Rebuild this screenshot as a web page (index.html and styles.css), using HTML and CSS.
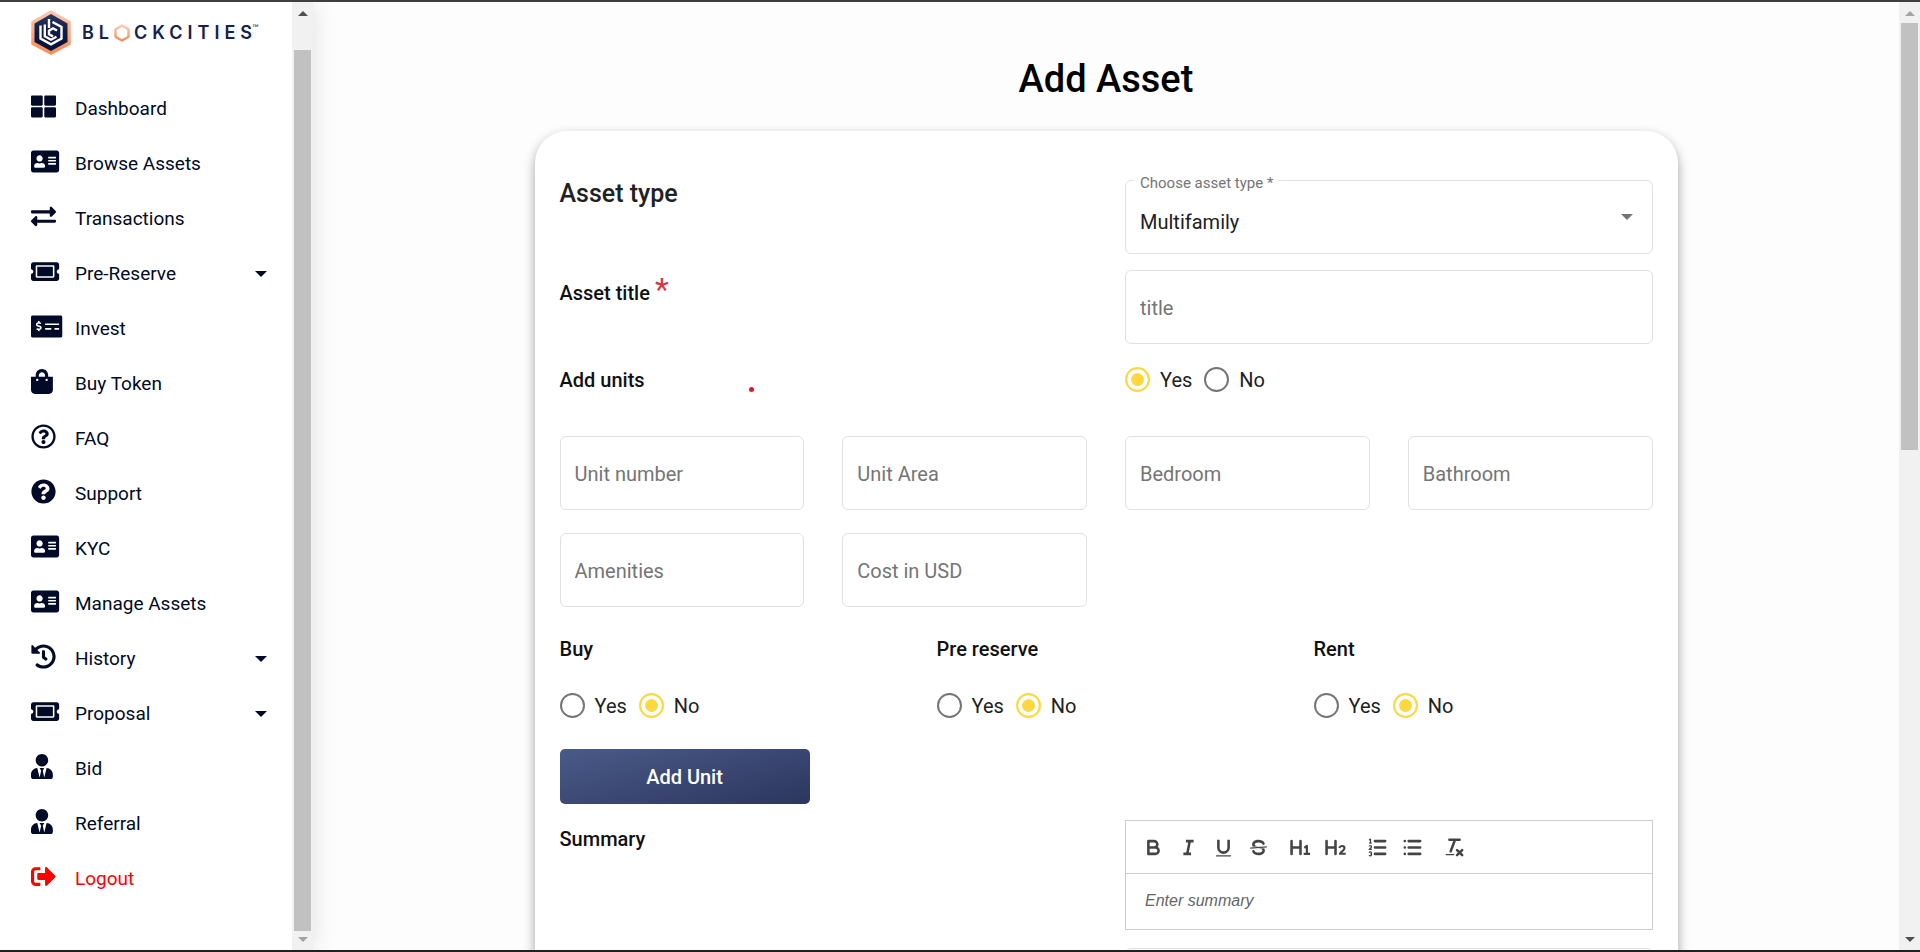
FILE: index.html
```
<!DOCTYPE html>
<html lang="en">
<head>
<meta charset="utf-8">
<meta name="viewport" content="width=device-width, initial-scale=1">
<title>Add Asset - Blockcities</title>
<link rel="stylesheet" href="styles.css">
</head>
<body>
<svg class="sprite" aria-hidden="true">
  <symbol id="i-grid" viewBox="0 0 512 512" preserveAspectRatio="xMinYMid meet"><path d="M296 32h192c13.255 0 24 10.745 24 24v160c0 13.255-10.745 24-24 24H296c-13.255 0-24-10.745-24-24V56c0-13.255 10.745-24 24-24zm-80 0H24C10.745 32 0 42.745 0 56v160c0 13.255 10.745 24 24 24h192c13.255 0 24-10.745 24-24V56c0-13.255-10.745-24-24-24zM0 296v160c0 13.255 10.745 24 24 24h192c13.255 0 24-10.745 24-24V296c0-13.255-10.745-24-24-24H24c-13.255 0-24 10.745-24 24zm296 184h192c13.255 0 24-10.745 24-24V296c0-13.255-10.745-24-24-24H296c-13.255 0-24 10.745-24 24v160c0 13.255 10.745 24 24 24z"/></symbol>
  <symbol id="i-card" viewBox="0 0 576 512" preserveAspectRatio="xMinYMid meet"><path d="M528 32H48C21.500 32 0 53.500 0 80v352c0 26.500 21.500 48 48 48h480c26.500 0 48-21.500 48-48V80c0-26.500-21.500-48-48-48zm-352 96c35.300 0 64 28.700 64 64s-28.700 64-64 64-64-28.700-64-64 28.700-64 64-64zm112 236.800c0 10.600-10 19.200-22.400 19.200H86.400C74 384 64 375.400 64 364.800v-19.200c0-31.800 30.100-57.600 67.200-57.600h5c12.300 5.100 25.700 8 39.800 8s27.600-2.900 39.800-8h5c37.100 0 67.200 25.800 67.200 57.600v19.200zM512 312c0 4.400-3.600 8-8 8H360c-4.400 0-8-3.600-8-8v-16c0-4.400 3.600-8 8-8h144c4.400 0 8 3.600 8 8v16zm0-64c0 4.400-3.600 8-8 8H360c-4.400 0-8-3.600-8-8v-16c0-4.400 3.600-8 8-8h144c4.400 0 8 3.600 8 8v16zm0-64c0 4.400-3.600 8-8 8H360c-4.400 0-8-3.600-8-8v-16c0-4.400 3.600-8 8-8h144c4.400 0 8 3.600 8 8v16z"/></symbol>
  <symbol id="i-exchange" viewBox="0 0 512 512" preserveAspectRatio="xMinYMid meet"><path d="M0 168v-16c0-13.255 10.745-24 24-24h360V80c0-21.367 25.899-32.042 40.971-16.971l80 80c9.372 9.373 9.372 24.569 0 33.941l-80 80C409.956 271.982 384 261.456 384 240v-48H24c-13.255 0-24-10.745-24-24zm488 152H128v-48c0-21.314-25.862-32.080-40.971-16.971l-80 80c-9.372 9.373-9.372 24.569 0 33.941l80 80C102.057 463.997 128 453.437 128 432v-48h360c13.255 0 24-10.745 24-24v-16c0-13.255-10.745-24-24-24z"/></symbol>
  <symbol id="i-ticket" viewBox="0 0 576 512" preserveAspectRatio="xMinYMid meet"><path d="M128 160h320v192H128V160zm400 96c0 26.510 21.490 48 48 48v96c0 26.510-21.490 48-48 48H48c-26.510 0-48-21.490-48-48v-96c26.510 0 48-21.490 48-48s-21.490-48-48-48v-96c0-26.510 21.490-48 48-48h480c26.510 0 48 21.490 48 48v96c-26.510 0-48 21.490-48 48zm-48-104c0-13.255-10.745-24-24-24H120c-13.255 0-24 10.745-24 24v208c0 13.255 10.745 24 24 24h336c13.255 0 24-10.745 24-24V152z"/></symbol>
  <symbol id="i-check" viewBox="0 0 640 512" preserveAspectRatio="xMinYMid meet"><path d="M608 32H32C14.330 32 0 46.330 0 64v384c0 17.670 14.330 32 32 32h576c17.670 0 32-14.330 32-32V64c0-17.670-14.330-32-32-32zM176 327.880V344c0 4.420-3.580 8-8 8h-16c-4.420 0-8-3.580-8-8v-16.290c-11.290-.580-22.270-4.520-31.370-11.350-3.900-2.930-4.100-8.770-.570-12.140l11.750-11.210c2.770-2.640 6.890-2.760 10.130-.730 3.870 2.420 8.260 3.720 12.820 3.720h28.110c6.500 0 11.800-5.920 11.800-13.190 0-5.950-3.610-11.190-8.770-12.730l-45-13.500c-18.590-5.580-31.580-23.420-31.580-43.390 0-24.520 19.050-44.440 42.670-45.070V152c0-4.420 3.580-8 8-8h16c4.420 0 8 3.580 8 8v16.290c11.290.580 22.270 4.510 31.370 11.350 3.900 2.930 4.100 8.770.570 12.140l-11.750 11.210c-2.770 2.640-6.890 2.760-10.130.730-3.870-2.430-8.260-3.720-12.820-3.720h-28.110c-6.500 0-11.800 5.920-11.800 13.190 0 5.950 3.610 11.190 8.770 12.730l45 13.500c18.590 5.580 31.580 23.420 31.580 43.390 0 24.530-19.050 44.440-42.670 45.070zM416 312c0 4.420-3.580 8-8 8H296c-4.420 0-8-3.580-8-8v-16c0-4.420 3.580-8 8-8h112c4.420 0 8 3.580 8 8v16zm160 0c0 4.420-3.580 8-8 8h-80c-4.420 0-8-3.580-8-8v-16c0-4.420 3.580-8 8-8h80c4.420 0 8 3.580 8 8v16zm0-96c0 4.420-3.580 8-8 8H296c-4.420 0-8-3.580-8-8v-16c0-4.420 3.580-8 8-8h272c4.420 0 8 3.580 8 8v16z"/></symbol>
  <symbol id="i-bag" viewBox="0 0 448 512" preserveAspectRatio="xMinYMid meet"><path d="M352 160v-32C352 57.420 294.579 0 224 0 153.420 0 96 57.420 96 128v32H0v272c0 44.183 35.817 80 80 80h288c44.183 0 80-35.817 80-80V160h-96zm-192-32c0-35.290 28.710-64 64-64s64 28.710 64 64v32H160v-32zm160 120c-13.255 0-24-10.745-24-24s10.745-24 24-24 24 10.745 24 24-10.745 24-24 24zm-192 0c-13.255 0-24-10.745-24-24s10.745-24 24-24 24 10.745 24 24-10.745 24-24 24z"/></symbol>
  <symbol id="i-faq" viewBox="0 0 512 512" preserveAspectRatio="xMinYMid meet"><path d="M256 8C119.043 8 8 119.083 8 256c0 136.997 111.043 248 248 248s248-111.003 248-248C504 119.083 392.957 8 256 8zm0 448c-110.532 0-200-89.431-200-200 0-110.495 89.472-200 200-200 110.491 0 200 89.471 200 200 0 110.530-89.431 200-200 200zm107.244-255.200c0 67.052-72.421 68.084-72.421 92.863V300c0 6.627-5.373 12-12 12h-45.647c-6.627 0-12-5.373-12-12v-8.659c0-35.745 27.100-50.034 47.579-61.516 17.561-9.845 28.324-16.541 28.324-29.579 0-17.246-21.999-28.693-39.784-28.693-23.189 0-33.894 10.977-48.942 29.969-4.057 5.120-11.460 6.071-16.666 2.124l-27.824-21.098c-5.107-3.872-6.251-11.066-2.644-16.363C184.846 131.491 214.940 112 261.794 112c49.071 0 101.450 38.304 101.450 88.800zM298 368c0 23.159-18.841 42-42 42s-42-18.841-42-42 18.841-42 42-42 42 18.841 42 42z"/></symbol>
  <symbol id="i-support" viewBox="0 0 512 512" preserveAspectRatio="xMinYMid meet"><path d="M504 256c0 136.997-111.043 248-248 248S8 392.997 8 256C8 119.083 119.043 8 256 8s248 111.083 248 248zM262.655 90c-54.497 0-89.255 22.957-116.549 63.758-3.536 5.286-2.353 12.415 2.715 16.258l34.699 26.310c5.205 3.947 12.621 3.008 16.665-2.122 17.864-22.658 30.113-35.797 57.303-35.797 20.429 0 45.698 13.148 45.698 32.958 0 14.976-12.363 22.667-32.534 33.976C247.128 238.528 216 254.941 216 296v4c0 6.627 5.373 12 12 12h56c6.627 0 12-5.373 12-12v-1.333c0-28.462 83.186-29.647 83.186-106.667 0-58.002-60.165-102-116.531-102zM256 338c-25.365 0-46 20.635-46 46 0 25.364 20.635 46 46 46s46-20.636 46-46c0-25.365-20.635-46-46-46z"/></symbol>
  <symbol id="i-history" viewBox="0 0 512 512" preserveAspectRatio="xMinYMid meet"><path d="M504 255.531c.253 136.640-111.180 248.372-247.820 248.468-59.015.042-113.223-20.530-155.822-54.911-11.077-8.940-11.905-25.541-1.839-35.607l11.267-11.267c8.609-8.609 22.353-9.551 31.891-1.984C173.062 425.135 212.781 440 256 440c101.705 0 184-82.311 184-184 0-101.705-82.311-184-184-184-48.814 0-93.149 18.969-126.068 49.932l50.754 50.754c10.080 10.080 2.941 27.314-11.313 27.314H24c-8.837 0-16-7.163-16-16V38.627c0-14.254 17.234-21.393 27.314-11.314l49.372 49.372C129.209 34.136 189.552 8 256 8c136.810 0 247.747 110.780 248 247.531zm-180.912 78.784l9.823-12.630c8.138-10.463 6.253-25.542-4.210-33.679L288 256.349V152c0-13.255-10.745-24-24-24h-16c-13.255 0-24 10.745-24 24v135.651l65.409 50.874c10.463 8.137 25.541 6.253 33.679-4.210z"/></symbol>
  <symbol id="i-user" viewBox="0 0 448 512" preserveAspectRatio="xMinYMid meet"><path d="M224 256c70.700 0 128-57.300 128-128S294.700 0 224 0 96 57.300 96 128s57.300 128 128 128zm95.800 32.600L272 480l-32-136 32-56h-96l32 56-32 136-47.800-191.400C56.900 292 0 350.300 0 422.400V464c0 26.500 21.500 48 48 48h352c26.500 0 48-21.500 48-48v-41.600c0-72.100-56.900-130.400-128.200-133.800z"/></symbol>
  <symbol id="i-logout" viewBox="0 0 512 512" preserveAspectRatio="xMinYMid meet"><path d="M497 273L329 441c-15 15-41 4.500-41-17v-96H152c-13.300 0-24-10.700-24-24v-96c0-13.300 10.700-24 24-24h136V88c0-21.400 25.900-32 41-17l168 168c9.300 9.400 9.300 24.600 0 34zM192 436v-40c0-6.600-5.400-12-12-12H96c-17.700 0-32-14.300-32-32V160c0-17.700 14.300-32 32-32h84c6.600 0 12-5.400 12-12V76c0-6.600-5.400-12-12-12H96c-53 0-96 43-96 96v192c0 53 43 96 96 96h84c6.600 0 12-5.400 12-12z"/></symbol>
  <symbol id="i-down" viewBox="0 0 12 6"><path d="M0 0h12L6 6z"/></symbol>
  <symbol id="i-up" viewBox="0 0 10 5"><path d="M5 0l5 5H0z"/></symbol>
</svg>

<div class="app">
  <aside class="sidebar">
    <div class="sidebar-body">
      <a class="brand" href="#" aria-label="Blockcities">
        <svg class="brand-mark" viewBox="0 0 40 45" aria-hidden="true">
          <defs>
            <linearGradient id="peach" x1="0" y1="0" x2="0" y2="1"><stop offset="0" stop-color="#fcc9b2"/><stop offset="1" stop-color="#ff8a50"/></linearGradient>
            <linearGradient id="navy" x1="0" y1="0" x2="0" y2="1"><stop offset="0" stop-color="#2a3760"/><stop offset=".5" stop-color="#101b47"/><stop offset="1" stop-color="#04103d"/></linearGradient>
          </defs>
          <path d="M20 1l19 11v22L20 44 1 34V12z" fill="url(#peach)" stroke="url(#peach)" stroke-width="1.500" stroke-linejoin="round"/>
          <path d="M20 4l16.500 9.500v18.500L20 41 3.500 32V13.500z" fill="url(#navy)"/>
          <g fill="none" stroke="#fff" stroke-width="2.400">
            <path d="M9.500 15.500v13L20 34.300l10.500-5.800V17l-9-5"/>
            <path d="M13.800 14.500v11.800l6.200 3.400 5.500-3"/>
            <path d="M18 9v9"/>
            <path d="M26 20.500L22 18.300l-4 2.300v3.600l4 2.200"/>
          </g>
        </svg>
        <span class="brand-name">BL<svg class="brand-o" viewBox="0 0 16 18" aria-hidden="true"><path d="M8 1.500l6.500 3.700v7.600L8 16.500l-6.500-3.700V5.200z" fill="none" stroke="url(#peach)" stroke-width="2.400" stroke-linejoin="round"/></svg>CKCITIE<span class="brand-last">S</span></span><span class="brand-tm">™</span>
      </a>
      <nav class="menu">
        <a class="menu-item" href="#"><svg class="menu-icon"><use href="#i-grid"/></svg><span>Dashboard</span></a>
        <a class="menu-item" href="#"><svg class="menu-icon"><use href="#i-card"/></svg><span>Browse Assets</span></a>
        <a class="menu-item" href="#"><svg class="menu-icon"><use href="#i-exchange"/></svg><span>Transactions</span></a>
        <a class="menu-item" href="#"><svg class="menu-icon"><use href="#i-ticket"/></svg><span>Pre-Reserve</span><svg class="caret"><use href="#i-down"/></svg></a>
        <a class="menu-item" href="#"><svg class="menu-icon"><use href="#i-check"/></svg><span>Invest</span></a>
        <a class="menu-item" href="#"><svg class="menu-icon"><use href="#i-bag"/></svg><span>Buy Token</span></a>
        <a class="menu-item" href="#"><svg class="menu-icon"><use href="#i-faq"/></svg><span>FAQ</span></a>
        <a class="menu-item" href="#"><svg class="menu-icon"><use href="#i-support"/></svg><span>Support</span></a>
        <a class="menu-item" href="#"><svg class="menu-icon"><use href="#i-card"/></svg><span>KYC</span></a>
        <a class="menu-item" href="#"><svg class="menu-icon"><use href="#i-card"/></svg><span>Manage Assets</span></a>
        <a class="menu-item" href="#"><svg class="menu-icon"><use href="#i-history"/></svg><span>History</span><svg class="caret"><use href="#i-down"/></svg></a>
        <a class="menu-item" href="#"><svg class="menu-icon"><use href="#i-ticket"/></svg><span>Proposal</span><svg class="caret"><use href="#i-down"/></svg></a>
        <a class="menu-item" href="#"><svg class="menu-icon"><use href="#i-user"/></svg><span>Bid</span></a>
        <a class="menu-item" href="#"><svg class="menu-icon"><use href="#i-user"/></svg><span>Referral</span></a>
        <a class="menu-item menu-item-logout" href="#"><svg class="menu-icon"><use href="#i-logout"/></svg><span>Logout</span></a>
      </nav>
    </div>
    <div class="scrollbar scrollbar-end" aria-hidden="true">
      <svg class="scroll-arrow scroll-arrow-on"><use href="#i-up"/></svg>
      <div class="scroll-track"><div class="scroll-thumb"></div></div>
      <svg class="scroll-arrow"><use href="#i-down"/></svg>
    </div>
  </aside>

  <main class="content">
    <h1 class="page-title">Add Asset</h1>
    <form class="card">
      <div class="row">
        <label class="heading" for="asset-type">Asset type</label>
        <div class="select-field">
          <span class="select-caption">Choose asset type *</span>
          <select class="field select" id="asset-type"><option>Multifamily</option></select>
          <svg class="select-arrow" aria-hidden="true"><use href="#i-down"/></svg>
        </div>
      </div>
      <div class="row">
        <label class="label" for="asset-title">Asset title <span class="required">*</span></label>
        <input class="field" id="asset-title" type="text" placeholder="title">
      </div>
      <div class="row row-units">
        <div class="label-line"><span class="label" id="units-label">Add units</span><span class="dot"></span></div>
        <div class="radios" role="radiogroup" aria-labelledby="units-label">
          <label class="radio"><input type="radio" name="units" checked>Yes</label>
          <label class="radio"><input type="radio" name="units">No</label>
        </div>
      </div>
      <div class="unit-grid">
        <input class="field" type="text" placeholder="Unit number" aria-label="Unit number">
        <input class="field" type="text" placeholder="Unit Area" aria-label="Unit Area">
        <input class="field" type="text" placeholder="Bedroom" aria-label="Bedroom">
        <input class="field" type="text" placeholder="Bathroom" aria-label="Bathroom">
        <input class="field" type="text" placeholder="Amenities" aria-label="Amenities">
        <input class="field" type="text" placeholder="Cost in USD" aria-label="Cost in USD">
      </div>
      <div class="offer-grid">
        <div class="offer" role="radiogroup" aria-labelledby="buy-label">
          <span class="label" id="buy-label">Buy</span>
          <div class="radios">
            <label class="radio"><input type="radio" name="buy">Yes</label>
            <label class="radio"><input type="radio" name="buy" checked>No</label>
          </div>
        </div>
        <div class="offer" role="radiogroup" aria-labelledby="reserve-label">
          <span class="label" id="reserve-label">Pre reserve</span>
          <div class="radios">
            <label class="radio"><input type="radio" name="reserve">Yes</label>
            <label class="radio"><input type="radio" name="reserve" checked>No</label>
          </div>
        </div>
        <div class="offer" role="radiogroup" aria-labelledby="rent-label">
          <span class="label" id="rent-label">Rent</span>
          <div class="radios">
            <label class="radio"><input type="radio" name="rent">Yes</label>
            <label class="radio"><input type="radio" name="rent" checked>No</label>
          </div>
        </div>
      </div>
      <button class="add-unit" type="button">Add Unit</button>
      <div class="row">
        <label class="label label-summary" for="summary">Summary</label>
        <div class="editor">
          <div class="toolbar">
            <div class="tools">
              <button class="tool" type="button" aria-label="Bold"><svg viewBox="0 0 18 18"><path d="M5 4h4.500a2.500 2.500 0 0 1 0 5H5zM5 9h5.500a2.500 2.500 0 0 1 0 5H5z"/></svg></button>
              <button class="tool" type="button" aria-label="Italic"><svg viewBox="0 0 18 18"><path d="M7 4h6M5 14h6M8 14l2-10"/></svg></button>
              <button class="tool" type="button" aria-label="Underline"><svg viewBox="0 0 18 18"><path d="M5 3v6a4 4 0 0 0 8 0V3"/><rect class="solid" x="3" y="15" width="12" height="1" rx=".5"/></svg></button>
              <button class="tool" type="button" aria-label="Strike"><svg viewBox="0 0 18 18"><path class="thin" d="M15.500 8.500l-13 1"/><path class="solid" d="M9.007 8C6.542 7.791 6 7.519 6 6.500 6 5.792 7.283 5 9 5c1.571 0 2.765.679 2.969 1.309a1 1 0 0 0 1.900-.617C13.356 4.106 11.354 3 9 3 6.200 3 4 4.538 4 6.500a3.200 3.200 0 0 0 .5 1.843zM8.984 10c2.473.208 3.016.479 3.016 1.500 0 .708-1.283 1.500-3 1.500-1.571 0-2.765-.679-2.969-1.309a1 1 0 1 0-1.900.617C4.644 13.894 6.646 15 9 15c2.800 0 5-1.538 5-3.500a3.200 3.200 0 0 0-.5-1.843z"/></svg></button>
            </div>
            <div class="tools">
              <button class="tool" type="button" aria-label="Heading 1"><svg viewBox="0 0 18 18"><path d="M2 4v10M9 4v10M2 9h7" stroke-linecap="round"/><path d="M12 9.300l2-1.500V14M11.500 14h5" stroke-width="1.700"/></svg></button>
              <button class="tool" type="button" aria-label="Heading 2"><svg viewBox="0 0 18 18"><path d="M2 4v10M9 4v10M2 9h7" stroke-linecap="round"/><path d="M12 9.300c.6-2 4-2 4 .2 0 1.500-2.500 2.700-3.500 4.400h4.500" stroke-width="1.700"/></svg></button>
            </div>
            <div class="tools">
              <button class="tool" type="button" aria-label="Ordered list"><svg viewBox="0 0 18 18"><path d="M7 4h8M7 9h8M7 14h8" stroke-linecap="round"/><path class="thin" d="M2.500 5.500h2M2.400 3l1.100-.5v3M4.500 10.500h-2c0-.234 1.850-1.076 1.850-2.234a.959.959 0 0 0-1.850-.110M2.500 14.846a.959.959 0 0 0 1.850-.109.700.700 0 0 0-.6-.737.688.688 0 0 0 .6-.736.959.959 0 0 0-1.850-.109"/></svg></button>
              <button class="tool" type="button" aria-label="Bullet list"><svg viewBox="0 0 18 18"><path d="M6 4h9M6 9h9M6 14h9M3 4h.01M3 9h.01M3 14h.01" stroke-linecap="round"/></svg></button>
            </div>
            <div class="tools">
              <button class="tool" type="button" aria-label="Clear formatting"><svg viewBox="0 0 18 18"><path d="M5 3h8M6 12l3.350-9M11 11l4 4M15 11l-4 4" stroke-linecap="round"/><rect class="solid" x="2" y="14" width="7" height="1" rx=".5"/></svg></button>
            </div>
          </div>
          <textarea class="editor-text" id="summary" rows="1" placeholder="Enter summary"></textarea>
        </div>
      </div>
      <div class="row">
        <span></span>
        <input class="field" type="text" aria-label="Details">
      </div>
    </form>
  </main>

  <div class="scrollbar scrollbar-page" aria-hidden="true">
    <svg class="scroll-arrow"><use href="#i-up"/></svg>
    <div class="scroll-track"><div class="scroll-thumb"></div></div>
    <svg class="scroll-arrow scroll-arrow-on"><use href="#i-down"/></svg>
  </div>
</div>
</body>
</html>
```
FILE: styles.css
```
* { box-sizing: border-box; }

body {
  margin: 0;
  font-family: Roboto, "Open Sans", sans-serif;
  font-size: 20px;
  line-height: 24px;
  color: #212121;
}

.sprite { display: none; }

.app {
  display: flex;
  height: 100vh;
  overflow: hidden;
  border-top: 2px solid #3f3d3e;
  border-bottom: 2px solid #202022;
  background: #fdfdfd;
}

/* Sidebar */
.sidebar {
  display: flex;
  flex: none;
  width: 313px;
  background: #fff;
  box-shadow: 0 0 24px rgba(0, 0, 0, 0.12);
}

.sidebar-body {
  flex: 1;
  overflow: hidden;
  padding-left: 31px;
}

.brand {
  display: flex;
  align-items: center;
  height: 79px;
  padding: 8px 0 26px;
  color: #16214d;
  text-decoration: none;
}

.brand-mark {
  flex: none;
  width: 40px;
  height: 45px;
}

.brand-name {
  display: flex;
  align-items: center;
  margin-left: 11px;
  font-family: Inter, sans-serif;
  font-size: 18px;
  font-weight: 600;
  letter-spacing: 5px;
}

.brand-o {
  width: 16px;
  height: 18px;
  margin-right: 4px;
}

.brand-last { letter-spacing: 0; }

.brand-tm {
  align-self: flex-start;
  font-family: Lato, sans-serif;
  font-size: 9px;
  line-height: 36px;
}

.menu-item {
  display: grid;
  grid-template-columns: 44px 1fr 12px;
  align-items: center;
  height: 55px;
  padding-right: 25px;
  font-size: 19px;
  color: #010a26;
  text-decoration: none;
}

.menu-item-logout { color: #f00; }

.menu-icon {
  width: 32px;
  height: 25px;
  margin-bottom: 4px;
  fill: currentColor;
}

.caret {
  width: 12px;
  height: 6px;
  fill: currentColor;
}

/* Scrollbars */
.scrollbar {
  display: flex;
  flex: none;
  flex-direction: column;
  align-items: center;
  width: 21px;
  padding: 9px 2px 8px;
  background: #f1f1f1;
}

.scroll-arrow {
  flex: none;
  width: 10px;
  height: 5px;
  fill: #a3a3a3;
}

.scroll-arrow-on { fill: #505050; }

.scroll-track {
  display: flex;
  flex: 1;
  flex-direction: column;
  align-self: stretch;
  margin: 7px 0 6px;
}

.scroll-thumb {
  height: 47%;
  background: #c1c1c1;
}

.scrollbar-end .scroll-track { justify-content: flex-end; }
.scrollbar-end .scroll-thumb { height: 97%; }

/* Page */
.content {
  flex: 1;
  min-width: 0;
  overflow: hidden;
}

.page-title {
  margin: 53px 0 28px;
  font-size: 38px;
  font-weight: 500;
  line-height: 48px;
  text-align: center;
  color: #000;
}

.card {
  display: flex;
  flex-direction: column;
  gap: 16px;
  max-width: 1143px;
  min-height: 1200px;
  margin: 0 auto;
  padding: 49px 25px;
  border-radius: 32px;
  background: #fff;
  box-shadow: 0 5px 12px rgba(0, 0, 0, 0.36);
}

.row {
  display: grid;
  grid-template-columns: 1fr 1fr;
  column-gap: 38px;
  align-items: start;
}

.row-units {
  align-items: center;
  padding: 7px 0 12px;
}

.heading {
  font-size: 25px;
  font-weight: 500;
  line-height: 28px;
}

.label {
  font-weight: 500;
  color: #111;
}

.row > .label { padding-top: 7px; }

.label-line {
  display: flex;
  align-items: center;
}

.dot {
  width: 5px;
  height: 5px;
  margin: 20px 0 0 104px;
  border-radius: 50%;
  background: #e3191b;
}

.required {
  font-size: 32px;
  font-weight: 400;
  line-height: 24px;
  color: #dc3545;
}

.field {
  width: 100%;
  min-width: 0;
  height: 74px;
  padding: 2px 14px 0;
  border: 1px solid #e0e0e0;
  border-radius: 6px;
  background: #fff;
  font: inherit;
  color: #212121;
}

.field::placeholder {
  color: #757575;
  opacity: 1;
}

.select-field { position: relative; }

.select {
  display: block;
  padding-top: 9px;
  appearance: none;
}

.select-caption {
  position: absolute;
  top: -7px;
  left: 9px;
  padding: 0 6px;
  background: #fff;
  font-size: 15px;
  line-height: 20px;
  color: #757575;
}

.select-arrow {
  position: absolute;
  top: 34px;
  right: 20px;
  width: 12px;
  height: 6px;
  fill: #757575;
}

.radios {
  display: flex;
  gap: 12px;
}

.radio {
  display: flex;
  align-items: center;
  gap: 10px;
}

.radio input {
  width: 25px;
  height: 25px;
  margin: 0;
  border: 2px solid #757575;
  border-radius: 50%;
  background: #fff;
  appearance: none;
}

.radio input:checked {
  border-color: #ffd740;
  background: #ffd740;
  box-shadow: inset 0 0 0 4px #fff;
}

.unit-grid {
  display: grid;
  grid-template-columns: repeat(4, 1fr);
  gap: 23px 38px;
  margin-top: 16px;
}

.offer-grid {
  display: grid;
  grid-template-columns: repeat(3, 1fr);
  gap: 38px;
  margin-top: 14px;
}

.offer {
  display: flex;
  flex-direction: column;
  gap: 32px;
}

.add-unit {
  width: 250px;
  height: 55px;
  margin-top: 15px;
  border: 0;
  border-radius: 5px;
  background: linear-gradient(165deg, #4a5a87, #2c365f);
  font: inherit;
  font-weight: 500;
  color: #fff;
}

.editor {
  margin-bottom: 2px;
  border: 1px solid #ccc;
}

.toolbar {
  display: flex;
  gap: 7px;
  padding: 11px 10px;
  border-bottom: 1px solid #ccc;
}

.tools { display: flex; }

.tool {
  display: flex;
  justify-content: center;
  align-items: center;
  width: 35px;
  height: 30px;
  padding: 0;
  border: 0;
  background: none;
}

.tool svg {
  width: 23px;
  height: 23px;
  fill: none;
  stroke: #444;
  stroke-width: 2;
  stroke-linejoin: round;
}

.tool .thin { stroke-width: 1; }

.tool .solid {
  fill: #444;
  stroke: none;
}

.editor-text {
  display: block;
  width: 100%;
  height: 55px;
  padding: 15px 19px;
  border: 0;
  background: none;
  font-family: "Liberation Sans", Arial, sans-serif;
  font-size: 16px;
  line-height: 24px;
  resize: none;
}

.editor-text::placeholder {
  font-style: italic;
  color: #666;
}
```
